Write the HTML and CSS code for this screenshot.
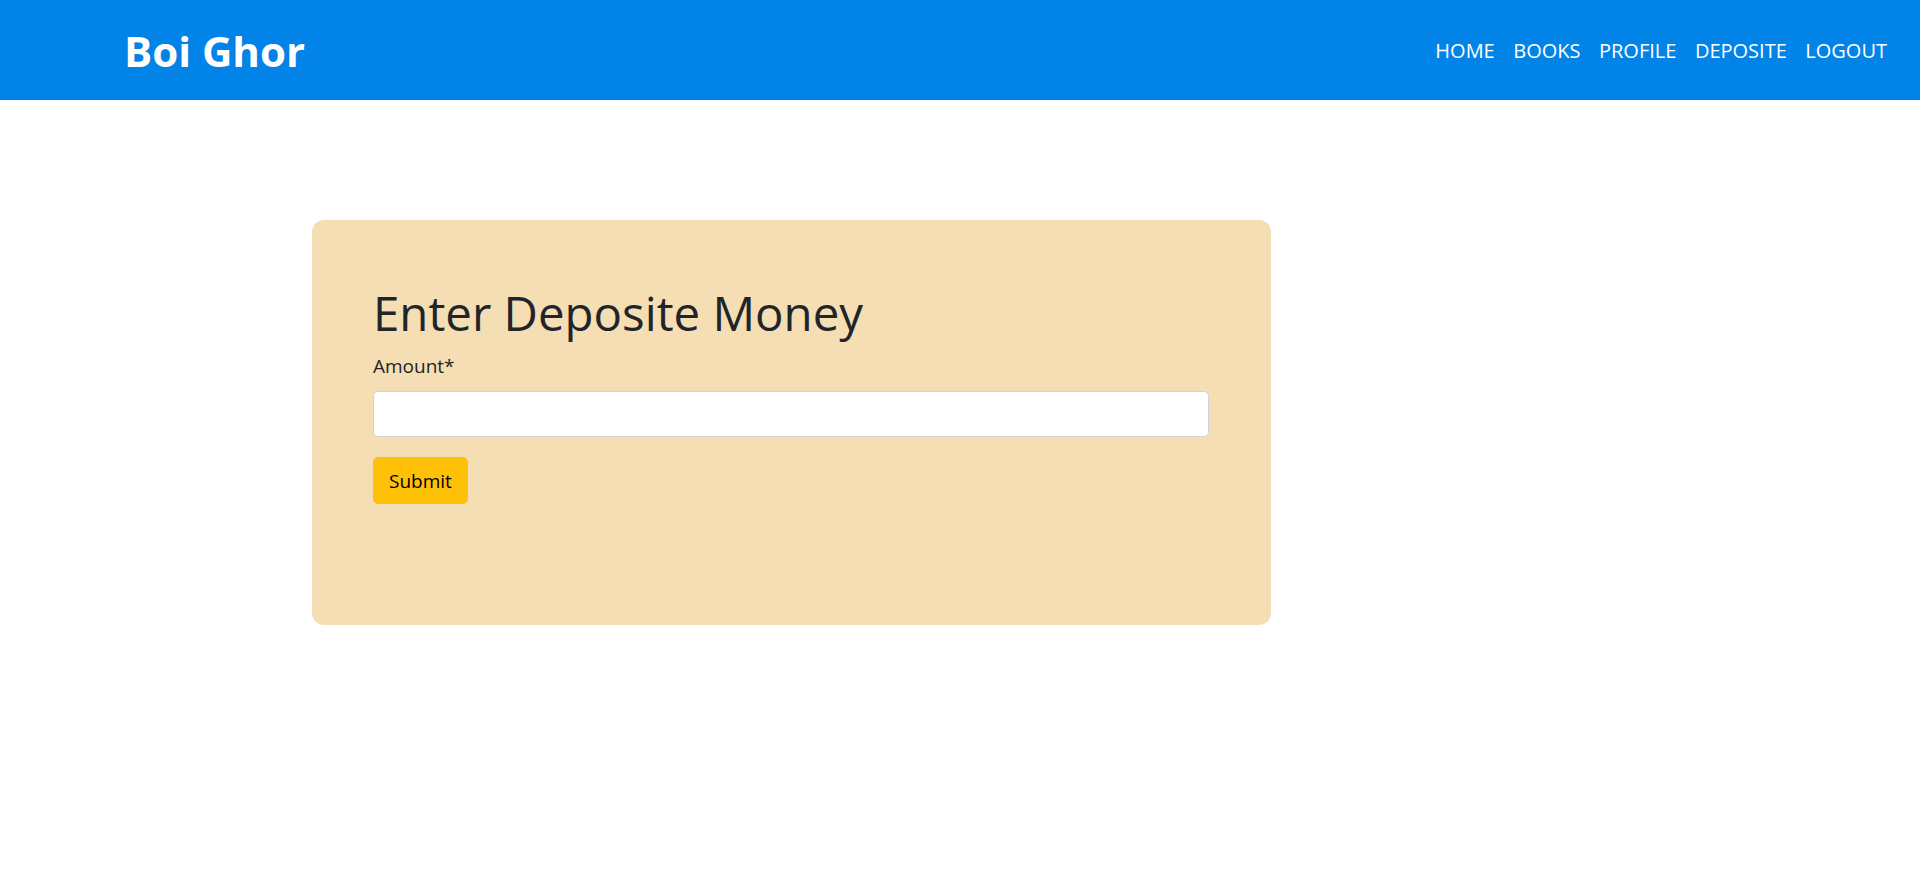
FILE: index.html
```html
<!DOCTYPE html>
<html lang="en">
<head>
<meta charset="utf-8">
<title>Boi Ghor - Deposite</title>
<link rel="stylesheet" href="styles.css">
</head>
<body>
<header class="navbar">
  <a class="brand" href="#">Boi Ghor</a>
  <nav>
    <ul class="nav-links">
      <li><a href="#">HOME</a></li>
      <li><a href="#">BOOKS</a></li>
      <li><a href="#">PROFILE</a></li>
      <li><a href="#">DEPOSITE</a></li>
      <li><a href="#">LOGOUT</a></li>
    </ul>
  </nav>
</header>
<main class="page">
  <section class="card">
    <h1 class="card-title">Enter Deposite Money</h1>
    <form class="deposit-form">
      <label class="form-label" for="amount">Amount*</label>
      <input class="form-control" id="amount" type="number">
      <button class="btn-submit" type="submit">Submit</button>
    </form>
  </section>
</main>
</body>
</html>
```
FILE: styles.css
```css
* { box-sizing: border-box; }
html, body { margin: 0; padding: 0; }
body {
  font-family: "Open Sans", "Noto Sans", sans-serif;
  font-size: 20px;
  line-height: 1.5;
  color: #212529;
  background: #ffffff;
}
.navbar {
  height: 100px;
  background: #0283e7;
  display: flex;
  align-items: center;
  justify-content: space-between;
  padding: 2px 33px 0 124px;
}
.brand {
  color: #ffffff;
  font-weight: 700;
  font-size: 42px;
  line-height: 60px;
  text-decoration: none;
}
.nav-links {
  list-style: none;
  margin: 0;
  padding: 0;
  display: flex;
  gap: 18.5px;
}
.nav-links a {
  color: #ffffff;
  text-decoration: none;
  font-size: 20px;
  line-height: 30px;
}
.page {
  padding: 120px 0 0 312px;
}
.card {
  width: 959px;
  background: #f5deb3;
  border-radius: 12px;
  padding: 64px 62px 121px 61px;
}
.card-title {
  margin: 0 0 10px;
  font-size: 47.4px;
  font-weight: 400;
  line-height: 57px;
  color: #212529;
}
.deposit-form {
  display: flex;
  flex-direction: column;
  align-items: flex-start;
}
.form-label {
  display: block;
  margin-bottom: 10px;
  font-size: 19px;
  line-height: 30px;
}
.form-control {
  width: 100%;
  height: 46px;
  background: #ffffff;
  border: 1px solid #ced4da;
  border-radius: 5px;
  font-family: inherit;
  font-size: 20px;
  padding: 7px 15px;
  margin-bottom: 20px;
}
.btn-submit {
  height: 47px;
  padding: 0 15px;
  background: #ffc107;
  border: 1px solid #ffc107;
  border-radius: 5px;
  color: #000000;
  font-family: inherit;
  font-size: 19px;
  line-height: 30px;
}
```
